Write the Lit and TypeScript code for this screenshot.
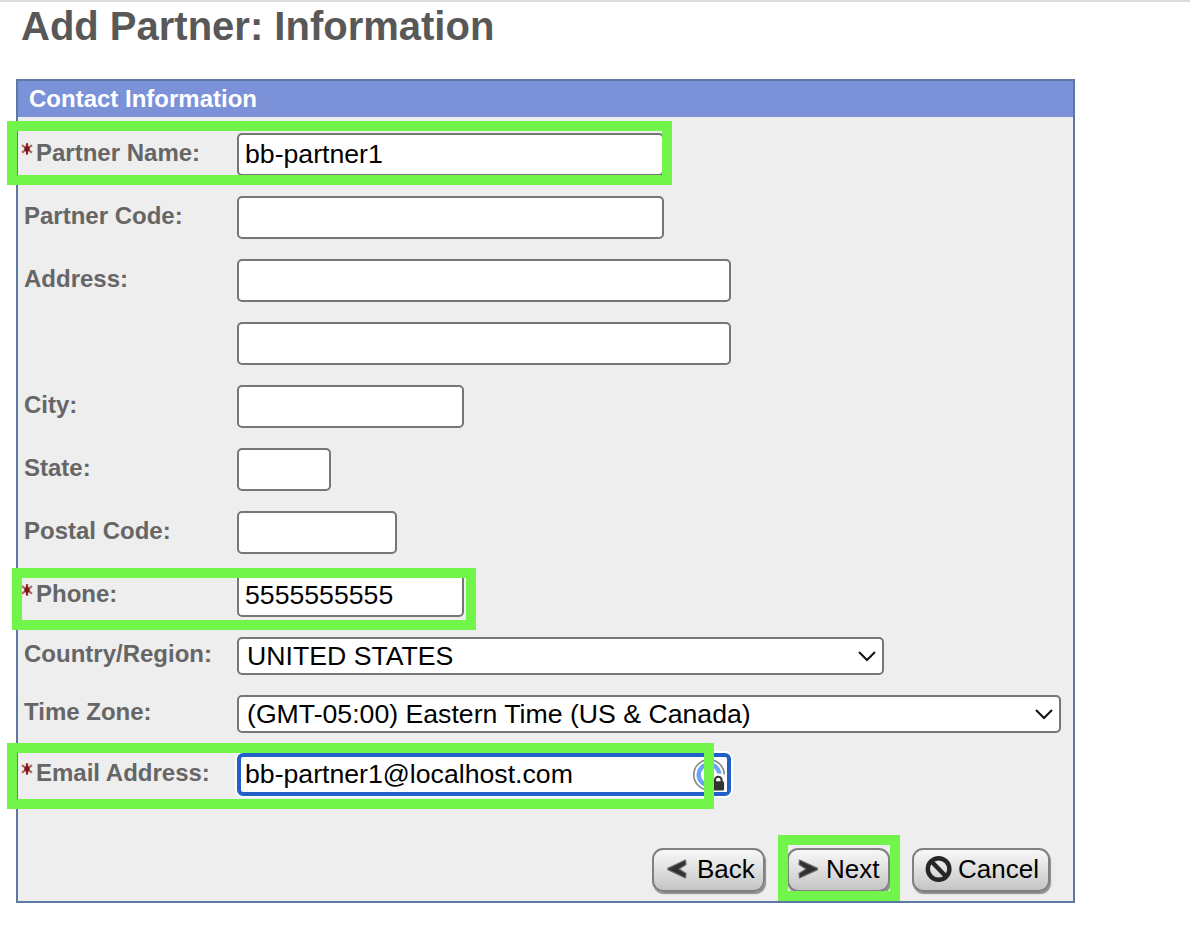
import { LitElement, html, css, nothing } from "lit";
import { customElement, property } from "lit/decorators.js";

type FieldKind = "text" | "select";

interface Field {
  label: string;
  size: string;
  kind?: FieldKind;
  value?: string;
  required?: boolean;
  focused?: boolean;
}

const FIELDS: Field[] = [
  { label: "Partner Name:", size: "w-name", value: "bb-partner1", required: true },
  { label: "Partner Code:", size: "w-name" },
  { label: "Address:", size: "w-wide" },
  { label: "", size: "w-wide" },
  { label: "City:", size: "w-city" },
  { label: "State:", size: "w-state" },
  { label: "Postal Code:", size: "w-postal" },
  { label: "Phone:", size: "w-city", value: "5555555555", required: true },
  { label: "Country/Region:", size: "w-country", kind: "select", value: "UNITED STATES" },
  { label: "Time Zone:", size: "w-zone", kind: "select", value: "(GMT-05:00) Eastern Time (US & Canada)" },
  { label: "Email Address:", size: "w-wide", value: "bb-partner1@localhost.com", required: true, focused: true },
];

const HIGHLIGHTS = ["h-name", "h-phone", "h-email", "h-next"];

@customElement("form-field")
class FormField extends LitElement {
  @property({ attribute: false }) field!: Field;

  static styles = css`
    :host { display: block; }
    .row { display: flex; align-items: flex-start; height: 43px; margin-bottom: 20px; }
    .row.select { height: 38px; }
    .label {
      width: 219px; box-sizing: border-box; padding-left: 6px;
      display: flex; color: #666; font-weight: bold; font-size: 24px; line-height: 39px; white-space: nowrap;
    }
    .select .label { line-height: 33px; }
    .required .label { padding-left: 2px; }
    .star { width: 14px; height: 16px; margin: 8px 2px 0 0; flex: none; }
    .control { display: grid; position: relative; }
    .box {
      grid-area: 1 / 1; box-sizing: border-box; width: 100%; height: 43px; margin: 0;
      border: 2px solid #767676; border-radius: 5px; background: #fff; color: #000;
      padding: 0 5px 1px 6px; font: 26.667px "Liberation Sans", Arial, sans-serif; outline: none;
    }
    .select .box { appearance: none; height: 38px; padding: 0 6px 0 8px; line-height: 34px; }
    .focused .box { border: 4px solid #2160c8; border-radius: 6px; padding: 0 3px 1px 4px; box-shadow: 0 0 0 2px #fff; }
    .chevron { grid-area: 1 / 1; justify-self: end; align-self: center; margin-right: 7px; pointer-events: none; }
    .vault { position: absolute; right: 3px; top: 5px; }
    .w-name { width: 427px; }
    .w-wide { width: 494px; }
    .w-city { width: 227px; }
    .w-state { width: 94px; }
    .w-postal { width: 160px; }
    .w-country { width: 647px; }
    .w-zone { width: 824px; }
  `;

  private star() {
    return html`<svg class="star" viewBox="0 0 14 16">
      <path d="M2 4.2 L12 11.6 M12 4.2 L2 11.6" stroke="#b06464" stroke-width="2.2" />
      <path d="M7 2.2V13.6" stroke="#8e2323" stroke-width="2.2" />
      <circle cx="7" cy="7.9" r="2.7" fill="#7d1616" />
    </svg>`;
  }

  private vault() {
    return html`<svg class="vault" width="36" height="36" viewBox="0 0 36 36">
      <circle cx="17" cy="16.8" r="15.2" fill="#fff" stroke="#858585" stroke-width="1.6" />
      <circle cx="17" cy="16.8" r="10.3" fill="none" stroke="#6aa5f5" stroke-width="4.4" />
      <path d="M19 21 Q19 15.5 26.5 15.5 Q33 15.5 35 18 V34 H19Z" fill="#fff" />
      <rect x="20.5" y="23.3" width="11.6" height="9.2" rx="1.6" fill="#333" />
      <path d="M23 24.5 V22 A3.3 3.3 0 0 1 29.6 22 V24.5" fill="none" stroke="#333" stroke-width="2.1" />
    </svg>`;
  }

  render() {
    const f = this.field;
    const select = f.kind === "select";
    return html`<div class="row ${select ? "select" : ""} ${f.required ? "required" : ""} ${f.focused ? "focused" : ""}">
      <label class="label">${f.required ? this.star() : nothing}${f.label}</label>
      <div class="control ${f.size}">
        ${select
          ? html`<select class="box"><option>${f.value}</option></select>
              <svg class="chevron" width="20" height="12" viewBox="0 0 20 12">
                <path d="M2 2 L10 10 L18 2" fill="none" stroke="#111" stroke-width="2" />
              </svg>`
          : html`<input class="box" type="text" .value=${f.value ?? ""} />`}
        ${f.focused ? this.vault() : nothing}
      </div>
    </div>`;
  }
}

@customElement("action-button")
class ActionButton extends LitElement {
  @property() label = "";
  @property() icon = "back";

  static styles = css`
    :host { display: block; }
    .button {
      width: 100%; height: 44px; box-sizing: border-box; padding: 0 6px 2px 13px;
      display: flex; align-items: center; border: 2px solid #808080; border-radius: 11px;
      background: linear-gradient(#f8f8f8, #e2e2e2 45%, #c4c4c4);
      box-shadow: 1px 2px 1px #8b8b8b; color: #000;
      font: 26px "Liberation Sans", Arial, sans-serif; white-space: nowrap;
    }
    .icon { flex: none; width: 20px; height: 20px; margin-right: 10px; }
    .next { padding-left: 9px; }
    .next .icon { margin-right: 8px; }
    .cancel { padding-left: 11px; }
    .cancel .icon { width: 28px; height: 28px; margin-right: 5px; }
  `;

  private glyph() {
    if (this.icon === "cancel") {
      return html`<svg class="icon" viewBox="0 0 28 28">
        <circle cx="13.6" cy="14" r="10.8" fill="none" stroke="#262626" stroke-width="4.4" />
        <path d="M6.5 6.5 L21 21.5" stroke="#262626" stroke-width="4.4" />
      </svg>`;
    }
    const d = this.icon === "back"
      ? "M18.5 1 L19 5.5 L12 10 L19 14.5 L18.5 19 L0.8 10.6 V9.4Z"
      : "M1.5 1 L1 5.5 L8 10 L1 14.5 L1.5 19 L19.6 10.6 V9.4Z";
    return html`<svg class="icon" viewBox="0 0 20 20">
      <path d=${d} fill="#303030" stroke="#686868" stroke-width="1.2" stroke-linejoin="round" />
    </svg>`;
  }

  render() {
    return html`<button class="button ${this.icon}">${this.glyph()}<span>${this.label}</span></button>`;
  }
}

@customElement("app-root")
class AppRoot extends LitElement {
  static styles = css`
    :host {
      display: block; position: relative; box-sizing: border-box; height: 934px; overflow: hidden;
      background: #fff; border-top: 2px solid #dcdcdc; padding-left: 16px;
      font-family: "Liberation Sans", Arial, sans-serif;
    }
    .title { margin: 0 0 0 5px; height: 77px; font-size: 40px; line-height: 48px; color: #585858; white-space: nowrap; }
    .panel { box-sizing: border-box; width: 1059px; height: 824px; border: 2px solid #5b79a3; background: #eee; }
    .heading {
      margin: 0; height: 36px; padding-left: 11px; background: #7b92d9; color: #fff;
      font-size: 24px; line-height: 35px;
    }
    .fields { padding-top: 16px; }
    .actions { display: flex; padding: 32px 0 0 634px; }
    .back { width: 113px; margin-right: 22px; }
    .next { width: 103px; margin-right: 22px; }
    .cancel { width: 138px; }
    .highlight { position: absolute; box-sizing: border-box; border: 10px solid #72f54a; pointer-events: none; }
    .h-name { left: 7px; top: 119px; width: 665px; height: 64px; }
    .h-phone { left: 12px; top: 566px; width: 464px; height: 62px; }
    .h-email { left: 7px; top: 741px; width: 707px; height: 66px; }
    .h-next { left: 778px; top: 833px; width: 122px; height: 66px; }
  `;

  render() {
    return html`
      <h1 class="title">Add Partner: Information</h1>
      <section class="panel">
        <h2 class="heading">Contact Information</h2>
        <div class="fields">${FIELDS.map((f) => html`<form-field .field=${f}></form-field>`)}</div>
        <div class="actions">
          <action-button class="back" icon="back" label="Back"></action-button>
          <action-button class="next" icon="next" label="Next"></action-button>
          <action-button class="cancel" icon="cancel" label="Cancel"></action-button>
        </div>
      </section>
      ${HIGHLIGHTS.map((h) => html`<div class="highlight ${h}"></div>`)}
    `;
  }
}
